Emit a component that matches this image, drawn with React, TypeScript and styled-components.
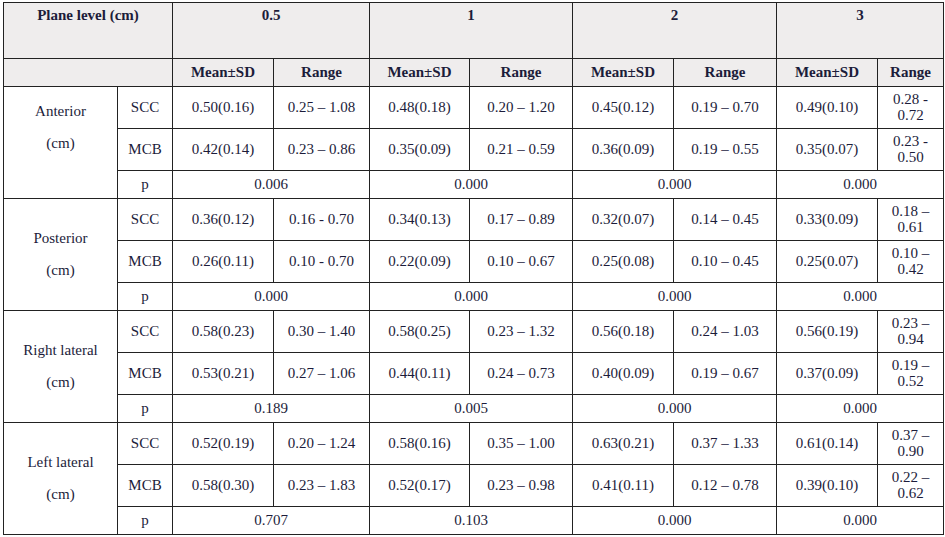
import React from "react";
import styled, { createGlobalStyle } from "styled-components";

const GlobalStyle = createGlobalStyle`
    body {
        margin: 0;
        background: #ffffff;
        font-family: "Liberation Serif", "DejaVu Serif", serif;
        color: #1c1c3a;
    }
`;

const Page = styled.div`
    padding: 2px 0 0 3px;
`;

const Table = styled.table`
    width: 940px;
    border-collapse: collapse;
    table-layout: fixed;
    font-size: 15px;
`;

const HeadRow = styled.tr<{ $tall?: boolean }>`
    height: ${p => (p.$tall ? "56px" : "28px")};
    background: #efeded;
`;

const Row = styled.tr<{ $p?: boolean }>`
    height: ${p => (p.$p ? "28px" : "42px")};
`;

const Th = styled.th<{ $top?: boolean }>`
    border: 1px solid #222;
    font-weight: bold;
    text-align: center;
    vertical-align: ${p => (p.$top ? "top" : "middle")};
    padding: ${p => (p.$top ? "4px 4px 0" : "0 4px 1px")};
`;

const Td = styled.td`
    border: 1px solid #222;
    text-align: center;
    vertical-align: middle;
    padding: 0 4px 1px;
    line-height: 16px;
`;

const SideCell = styled.td<{ $shift?: boolean }>`
    border: 1px solid #222;
    text-align: center;
    vertical-align: middle;
    line-height: 32px;
    padding: 0 0 ${p => (p.$shift ? "31px" : "1px")};
`;

type Pair = [string, string];

interface Group {
    region: string;
    scc: Pair[];
    mcb: Pair[];
    p: string[];
}

const groups: Group[] = [
    {
        region: "Anterior",
        scc: [["0.50(0.16)", "0.25 – 1.08"], ["0.48(0.18)", "0.20 – 1.20"], ["0.45(0.12)", "0.19 – 0.70"], ["0.49(0.10)", "0.28 - 0.72"]],
        mcb: [["0.42(0.14)", "0.23 – 0.86"], ["0.35(0.09)", "0.21 – 0.59"], ["0.36(0.09)", "0.19 – 0.55"], ["0.35(0.07)", "0.23 - 0.50"]],
        p: ["0.006", "0.000", "0.000", "0.000"],
    },
    {
        region: "Posterior",
        scc: [["0.36(0.12)", "0.16 - 0.70"], ["0.34(0.13)", "0.17 – 0.89"], ["0.32(0.07)", "0.14 – 0.45"], ["0.33(0.09)", "0.18 – 0.61"]],
        mcb: [["0.26(0.11)", "0.10 - 0.70"], ["0.22(0.09)", "0.10 – 0.67"], ["0.25(0.08)", "0.10 – 0.45"], ["0.25(0.07)", "0.10 – 0.42"]],
        p: ["0.000", "0.000", "0.000", "0.000"],
    },
    {
        region: "Right lateral",
        scc: [["0.58(0.23)", "0.30 – 1.40"], ["0.58(0.25)", "0.23 – 1.32"], ["0.56(0.18)", "0.24 – 1.03"], ["0.56(0.19)", "0.23 – 0.94"]],
        mcb: [["0.53(0.21)", "0.27 – 1.06"], ["0.44(0.11)", "0.24 – 0.73"], ["0.40(0.09)", "0.19 – 0.67"], ["0.37(0.09)", "0.19 – 0.52"]],
        p: ["0.189", "0.005", "0.000", "0.000"],
    },
    {
        region: "Left lateral",
        scc: [["0.52(0.19)", "0.20 – 1.24"], ["0.58(0.16)", "0.35 – 1.00"], ["0.63(0.21)", "0.37 – 1.33"], ["0.61(0.14)", "0.37 – 0.90"]],
        mcb: [["0.58(0.30)", "0.23 – 1.83"], ["0.52(0.17)", "0.23 – 0.98"], ["0.41(0.11)", "0.12 – 0.78"], ["0.39(0.10)", "0.22 – 0.62"]],
        p: ["0.707", "0.103", "0.000", "0.000"],
    },
];

const levels = ["0.5", "1", "2", "3"];
const widths = [114, 55, 101, 96, 100, 103, 101, 103, 101, 66];

const Values: React.FC<{ pairs: Pair[] }> = ({ pairs }) => (
    <>
        {pairs.map(([mean, range], i) => (
            <React.Fragment key={i}>
                <Td>{mean}</Td>
                <Td>{range}</Td>
            </React.Fragment>
        ))}
    </>
);

export default function App() {
    return (
        <Page>
            <GlobalStyle />
            <Table>
                <colgroup>
                    {widths.map((w, i) => (
                        <col key={i} style={{ width: w }} />
                    ))}
                </colgroup>
                <thead>
                    <HeadRow $tall>
                        <Th colSpan={2} $top>Plane level (cm)</Th>
                        {levels.map(l => (
                            <Th key={l} colSpan={2} $top>{l}</Th>
                        ))}
                    </HeadRow>
                    <HeadRow>
                        <Th colSpan={2} />
                        {levels.map(l => (
                            <React.Fragment key={l}>
                                <Th>Mean±SD</Th>
                                <Th>Range</Th>
                            </React.Fragment>
                        ))}
                    </HeadRow>
                </thead>
                <tbody>
                    {groups.map((g, gi) => (
                        <React.Fragment key={g.region}>
                            <Row>
                                <SideCell rowSpan={3} $shift={gi === 0}>
                                    {g.region}
                                    <br />
                                    (cm)
                                </SideCell>
                                <Td>SCC</Td>
                                <Values pairs={g.scc} />
                            </Row>
                            <Row>
                                <Td>MCB</Td>
                                <Values pairs={g.mcb} />
                            </Row>
                            <Row $p>
                                <Td>p</Td>
                                {g.p.map((v, i) => (
                                    <Td key={i} colSpan={2}>{v}</Td>
                                ))}
                            </Row>
                        </React.Fragment>
                    ))}
                </tbody>
            </Table>
        </Page>
    );
}
